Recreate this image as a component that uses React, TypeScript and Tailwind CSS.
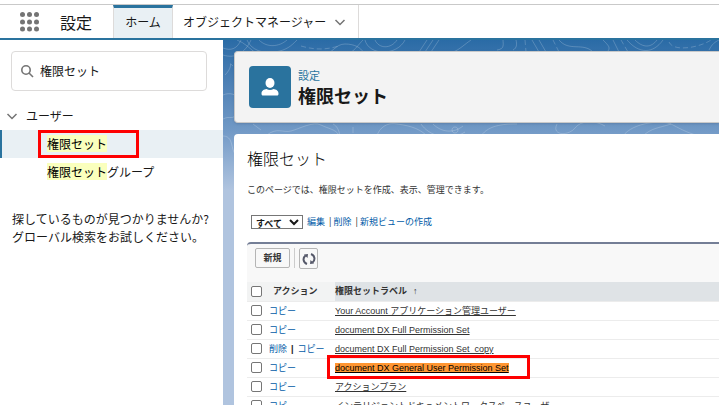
import type { ReactNode } from "react";

const rows = [
  { label: "Your Account アプリケーション管理ユーザー" },
  { label: "document DX Full Permission Set" },
  { label: "document DX Full Permission Set_copy", removable: true },
  { label: "document DX General User Permission Set", marked: true },
  { label: "アクションプラン" },
  { label: "インテリジェントドキュメントワークスペースユーザー" },
];

function Chevron() {
  return (
    <svg viewBox="0 0 12 12" className="size-3 shrink-0 fill-none stroke-[#747474] stroke-[1.5]">
      <path d="M1.500 4 6 8.500 10.500 4" />
    </svg>
  );
}

function Contours() {
  return (
    <svg
      aria-hidden="true"
      viewBox="0 0 496 170"
      preserveAspectRatio="xMinYMin slice"
      className="absolute inset-x-0 top-0 h-[170px] w-full fill-none stroke-white/20"
    >
      <path d="M0 8c8 3 14 1 18-8M0 15c12 4 22-2 28-15M2 35c10-10 2-14 8-9M0 55c14-6 24 10 16 18s-8 2-16 6M0 96c14 0 4 22 20 20" />
      <path d="M14 0c8 3 12 8 20 14M24 0c4 10 16 14 28 12S68 6 74 0M36 0c8 8 20 7 28 0M100 14c10 0 12-10 22-10s16 4 18 8M128 12c4-2 8-8 12-12" />
      <path d="M78 6c14 4 24 4 38 0" strokeDasharray="5 3" />
      <path d="M142 0c4 16 32 16 40 0M152 0c4 9 16 9 22 0M196 12l8-12M202 12l8-12M208 12l8-12M230 12c6-2 12-8 18-12M274 10c8-1 6-6 6-10M290 10c4-2 4-6 3-10M309 0l7 12M316 0l7 12M336 0c10 12 24 2 34 12M380 0c6 6 8 8 4 12M390 0l6 12M404 0c12 14 26 14 36 0M412 0c8 8 16 8 22 0M486 10c3-6 6-8 10-10" />
      <path d="M446 2c4 10 30 6 42-2M302 0l1 12M330 0l6 12M398 0l7 12" strokeDasharray="5 3" />
      <path d="M44 95c10-8 16-2 24-4s22-10 30-6 14 4 18 10M30 84l8 6M110 84c4 2 6 6 7 12M130 87v6M154 96c2-8 10-14 20-12M174 84c16 2 24 6 30 12M198 84c8 12 28 18 44 8M210 84c8 8 20 10 30 2M232 87c4 0 4 6 0 6s-4-6 0-6M258 96c8-12 26-12 36-12M334 84c-6 12 12 12 18 4s20-8 30-2M400 96c10-14 40-16 48-12s14 8 28 12M420 96c8-8 16-8 28-12" />
    </svg>
  );
}

function Link({ children, className = "text-[#015ba7]" }: { children: ReactNode; className?: string }) {
  return (
    <a href="#" className={className}>
      {children}
    </a>
  );
}

function TopBar() {
  return (
    <header className="mt-1 flex h-9 shrink-0 items-stretch border-t border-b-2 border-t-[#c9c9c9] border-b-[#2a739e] bg-white">
      <div className="flex w-[113px] items-center">
        <button aria-label="アプリケーションランチャー" className="ml-5">
          <svg viewBox="0 0 20 20" className="size-5 fill-[#747474]">
            {[2.5, 10, 17].map((y) => [2.5, 9.5, 16.5].map((x) => <circle key={`${x}-${y}`} cx={x} cy={y} r="2.5" />))}
          </svg>
        </button>
        <span className="ml-5 text-base">設定</span>
      </div>
      <nav className="flex text-xs">
        <a href="#" className="flex w-[60px] items-center justify-center border-x border-t-3 border-x-[#dddbda] border-t-[#2a739e] bg-[#e9f0f4] pb-[3px]">
          ホーム
        </a>
        <a href="#" className="flex items-center gap-2 border-r border-[#dddbda] pr-3 pl-2.5">
          オブジェクトマネージャー
          <Chevron />
        </a>
      </nav>
    </header>
  );
}

function Sidebar() {
  return (
    <aside className="w-[223px] shrink-0 bg-white pt-[11px] text-xs">
      <label className="mr-4 ml-[11px] flex h-10 items-center gap-1.5 rounded border border-[#dddbda] px-2">
        <svg viewBox="0 0 14 14" className="size-3.5 shrink-0 fill-none stroke-[#747474] stroke-[1.6]">
          <circle cx="6" cy="6" r="4.2" />
          <path d="m9 9 4 4" />
        </svg>
        <input aria-label="クイック検索" defaultValue="権限セット" className="w-full min-w-0 outline-none" />
      </label>
      <button className="mt-4 ml-1.5 flex h-[18px] items-center gap-2">
        <Chevron />
        ユーザー
      </button>
      <ul className="mt-[5px]">
        <li className="relative flex h-7 items-center border-l-2 border-[#2a739e] bg-[#e9f0f4] pl-[45px]">
          <a href="#"><mark className="bg-[#faffbd]">権限セット</mark></a>
          <span className="absolute inset-y-0 left-9 w-[101px] border-3 border-[#fe0000]" />
        </li>
        <li className="flex h-7 items-center pl-[47px]">
          <a href="#"><mark className="bg-[#faffbd]">権限セット</mark>グループ</a>
        </li>
      </ul>
      <p className="mt-6 ml-3 leading-[18px]">
        探しているものが見つかりませんか?
        <br />
        グローバル検索をお試しください。
      </p>
    </aside>
  );
}

function PermissionTable() {
  return (
    <table className="w-full table-fixed border-collapse text-left font-['Liberation_Sans','Noto_Sans_CJK_JP',sans-serif] text-[9px] leading-3">
      <colgroup>
        <col className="w-[22px]" />
        <col className="w-[66px]" />
        <col />
      </colgroup>
      <thead>
        <tr className="h-[19px] border-b border-[#ececec] bg-[#dfe3e6] text-[#333]">
          <th className="bg-[#f2f3f3] pl-1">
            <input type="checkbox" aria-label="すべて選択" className="block size-[11px] appearance-none rounded-xs border border-[#767676] bg-white" />
          </th>
          <th className="bg-[#f2f3f3] pl-1">アクション</th>
          <th>
            権限セットラベル<span className="ml-1.5">↑</span>
          </th>
        </tr>
      </thead>
      <tbody>
        {rows.map((row) => (
          <tr key={row.label} className="h-[19px] border-b border-[#ececec]">
            <td className="pl-1">
              <input type="checkbox" aria-label={row.label} className="block size-[11px] appearance-none rounded-xs border border-[#767676] bg-white" />
            </td>
            <td className="whitespace-nowrap">
              {row.removable && (
                <>
                  <Link>削除</Link>
                  <span className="mx-1 font-bold">|</span>
                </>
              )}
              <Link>コピー</Link>
            </td>
            <td className="relative whitespace-nowrap">
              <Link className={row.marked ? "bg-[#ff9632] text-black underline" : "text-[#333] underline"}>{row.label}</Link>
              {row.marked && <span className="absolute -top-1 -left-2 h-6 w-[203px] border-3 border-[#fe0000]" />}
            </td>
          </tr>
        ))}
      </tbody>
    </table>
  );
}

export default function App() {
  return (
    <div className="flex h-screen flex-col overflow-hidden bg-white font-['Noto_Sans_CJK_JP',sans-serif] text-[#181818]">
      <TopBar />
      <div className="flex min-h-0 grow">
        <Sidebar />
        <main className="relative min-w-0 grow overflow-hidden bg-[#b0c4df] bg-linear-to-b from-[#2a6ba6] via-[#7199c6] via-[90px] to-[#b0c4df] to-[150px] pt-[11px] pl-[11px]">
          <Contours />
          <section className="relative flex h-[72px] items-center gap-[7px] rounded-l border-y border-l border-[#c9c9c9] bg-[#f3f3f3] pl-3.5 shadow-sm">
            <span className="flex size-[42px] items-center justify-center rounded bg-[#2a739e]">
              <svg viewBox="0 0 18 18" className="size-[18px] fill-white">
                <ellipse cx="9" cy="5" rx="4.5" ry="5" />
                <path d="M.5 15.5C.5 12.500 3 11.500 5.500 11 7.500 12.300 10.500 12.300 12.500 11 15 11.500 17.500 12.500 17.500 15.500 17.500 17 17 17.500 16 17.500H2C1 17.500.5 17 .5 15.500Z" />
              </svg>
            </span>
            <div>
              <p className="text-[11px] leading-4 text-[#2a739e]">設定</p>
              <h1 className="text-lg leading-6 font-bold">権限セット</h1>
            </div>
          </section>
          <section className="relative mt-[11px] h-full rounded-tl bg-white pt-3 pl-[13px]">
            <h2 className="text-base leading-6 font-light text-black">権限セット</h2>
            <p className="mt-3 text-[9px] leading-4 text-[#333]">このページでは、権限セットを作成、表示、管理できます。</p>
            <div className="mt-4 flex h-4 items-center gap-1 pl-1 text-[9px]">
              <select aria-label="ビュー" className="h-3.5 w-[52px] border border-[#767676] bg-white text-[9px] leading-3 font-bold">
                <option>すべて</option>
              </select>
              <Link>編集</Link>
              <span className="flex gap-0.5">|<Link>削除</Link></span>
              <span className="flex gap-0.5">|<Link>新規ビューの作成</Link></span>
            </div>
            <div className="mt-3 flex h-10 items-start rounded-tl border-t-2 border-[#747e96] bg-[#f8f8f8] pt-1 pl-2">
              <button className="h-5 w-[35px] rounded-xs border border-[#b5b5b5] text-[9px] font-bold text-[#333]">新規</button>
              <span className="mx-1 h-5 border-l border-[#ccc]" />
              <button aria-label="更新" className="flex h-[21px] w-[19px] items-center justify-center rounded-xs border border-[#b5b5b5]">
                <svg viewBox="0 0 14 14" className="size-3.5 shrink-0 fill-none stroke-[#555869] stroke-2">
                  <path d="M5 12C1 10.500.5 6 3.500 3.500M9 2c4 1.500 4.500 6 1.500 8.500" />
                  <path d="M2 2.500 6 2 5.500 6ZM12 11.500 8 12 8.500 8Z" className="fill-[#555869] stroke-none" />
                </svg>
              </button>
            </div>
            <PermissionTable />
          </section>
        </main>
      </div>
    </div>
  );
}
